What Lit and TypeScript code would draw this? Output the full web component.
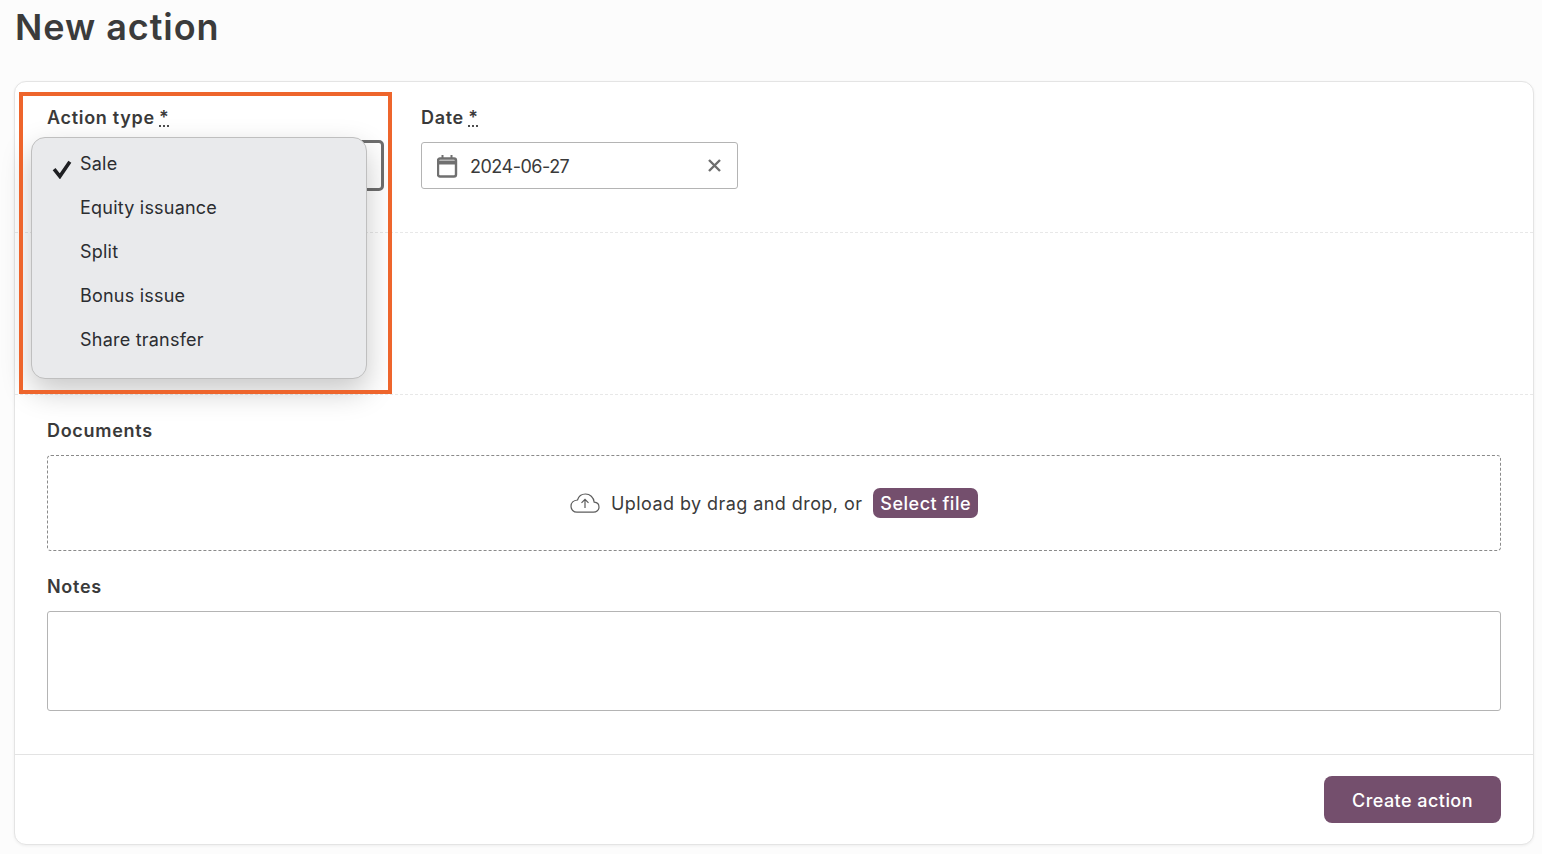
import { LitElement, html, css } from "lit";
import { customElement } from "lit/decorators.js";

@customElement("app-root")
export class AppRoot extends LitElement {
  static styles = css`
    :host { display: block; height: 854px; overflow: hidden; background: #fcfcfc; color: #3a3a3a; font-family: "Inter", "Liberation Sans", sans-serif; font-size: 18px; letter-spacing: .43px; }
    * { box-sizing: border-box; }
    .page { padding: 0 8px 0 14px; position: relative; }
    h1 { margin: 0; height: 81px; padding: 4px 0 0 1px; font-size: 36px; line-height: 46px; font-weight: 600; color: #3b3b3b; letter-spacing: .95px; }
    .card { height: 764px; background: #fff; border: 1px solid #e4e4e4; border-radius: 12px; box-shadow: 0 1px 3px rgba(0,0,0,.06); display: flex; flex-direction: column; position: relative; }
    .sec1 { height: 151px; padding: 24px 32px 0; border-bottom: 1px dashed #e8e8e8; display: flex; gap: 37px; }
    .sec2 { height: 162px; border-bottom: 1px dashed #e8e8e8; }
    .sec3 { flex: 1; padding: 24px 32px 0; }
    .foot { height: 90px; border-top: 1px solid #e3e3e3; padding: 21px 32px; display: flex; justify-content: flex-end; }
    label { display: block; font-weight: 600; font-size: 18px; line-height: 24px; color: #3a3a3a; letter-spacing: .7px; }
    abbr { text-decoration: underline dotted; text-underline-offset: 2px; margin-left: -1px; }
    .f1 { width: 337px; }
    .f2 { width: 317px; }
    .sel { margin-top: 10px; height: 51px; border: 3px solid #6e6e6e; border-radius: 5px; }
    .date { margin-top: 12px; height: 47px; border: 1px solid #b4b4b4; border-radius: 3px; display: flex; align-items: center; padding: 0 16px 0 15px; gap: 12px; font-size: 18px; letter-spacing: -.5px; }
    .date span { flex: 1; padding-top: 2px; }
    .drop { margin-top: 12px; height: 96px; border: 1px dashed #8a8a8a; border-radius: 4px; display: flex; align-items: center; justify-content: center; gap: 11px; }
    .btn-s { background: #744f6d; color: #fff; font-weight: 500; border-radius: 7px; height: 30px; padding: 0 7px; display: flex; align-items: center; letter-spacing: .5px; }
    .notes-l { margin-top: 24px; }
    .notes { margin-top: 12px; height: 100px; border: 1px solid #b4b4b4; border-radius: 3px; }
    .create { width: 177px; height: 47px; border-radius: 8px; background: #744f6d; color: #fff; font-weight: 500; display: flex; align-items: center; justify-content: center; padding-top: 2px; letter-spacing: .45px; }
    .hl { position: absolute; left: 19px; top: 92px; width: 373px; height: 302px; border: 4px solid #ee652c; }
    .menu { position: absolute; left: 31px; top: 137px; width: 336px; height: 242px; background: #e9eaec; border: 1px solid #bfbfbf; border-radius: 14px; box-shadow: 0 12px 30px rgba(0,0,0,.22); padding: 5px 0 0 48px; color: #2b2d31; letter-spacing: .22px; }
    .menu div { height: 44px; line-height: 42px; position: relative; }
    .menu svg { position: absolute; left: -28px; top: 15px; }
  `;
  render() {
    return html`<div class="page">
      <h1>New action</h1>
      <div class="card">
        <div class="sec1">
          <div class="f1"><label>Action type <abbr>*</abbr></label><div class="sel"></div></div>
          <div class="f2"><label>Date <abbr>*</abbr></label>
            <div class="date">
              <svg width="21" height="24" viewBox="0 0 21 24" fill="none" stroke="#707070" stroke-width="2.4"><rect x="1" y="4.500" width="18" height="18" rx="2"/><path d="M1 8.500h18" stroke-width="4"/><path d="M5.500 1v3M14.500 1v3" stroke-width="2"/></svg>
              <span>2024-06-27</span>
              <svg width="13" height="13" viewBox="0 0 13 13" stroke="#6e6e6e" stroke-width="2.400"><path d="M1 1l11 11M12 1L1 12"/></svg>
            </div>
          </div>
        </div>
        <div class="sec2"></div>
        <div class="sec3">
          <label>Documents</label>
          <div class="drop">
            <svg width="30" height="20" viewBox="0 0 30 20" fill="none" stroke="#5c5c5c" stroke-width="1.2"><path d="M7 19.200h16.500c3 0 5.500-2.200 5.500-5s-2-4.800-4.800-5C23.600 4.200 20 1 15.500 1 11.500 1 8.500 3.500 7.500 7 3.500 7.300 1 10 1 13.300 1 16.600 3.500 19.200 7 19.200z"/><path d="M15 15V6.500M11.500 9.800L15 6.300l3.500 3.500"/></svg>
            <span>Upload by drag and drop, or</span>
            <div class="btn-s">Select file</div>
          </div>
          <label class="notes-l">Notes</label>
          <div class="notes"></div>
        </div>
        <div class="foot"><div class="create">Create action</div></div>
      </div>
      <div class="menu">
        <div>Sale<svg width="21" height="21" viewBox="0 0 20 20" fill="none" stroke="#1f2023" stroke-width="3.400"><path d="M2 10.500l5.500 7L17 3.500"/></svg></div>
        <div>Equity issuance</div>
        <div>Split</div>
        <div>Bonus issue</div>
        <div>Share transfer</div>
      </div>
      <div class="hl"></div>
    </div>`;
  }
}
